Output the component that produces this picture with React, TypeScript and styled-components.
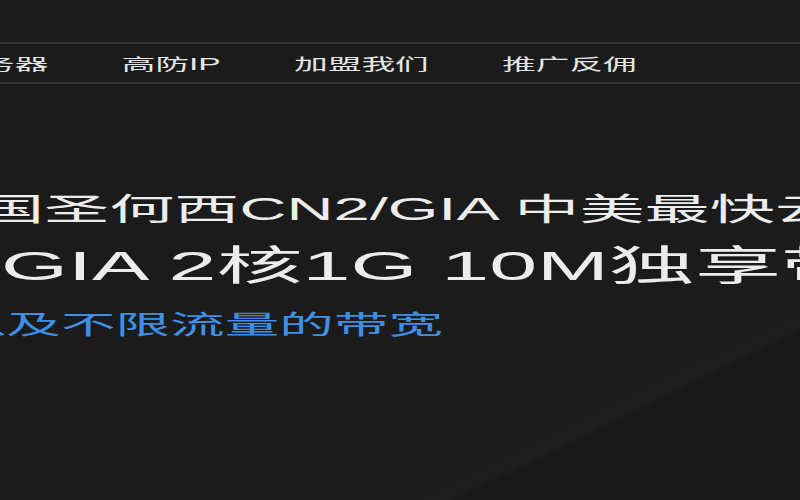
import styled, { createGlobalStyle } from "styled-components";

// the shot is a crop of a wide page, squeezed so it reads about 2.1x wider than tall
const STRETCH = 2.1;

const GlobalStyle = createGlobalStyle`
  html, body {
    margin: 0;
    padding: 0;
    background: #1b1b1b;
    overflow: hidden;
  }
  * {
    box-sizing: border-box;
  }
`;

const Page = styled.div`
  width: 800px;
  height: 500px;
  overflow: hidden;
  background: linear-gradient(
    154deg,
    #1b1b1b 0%,
    #1b1b1b 72%,
    #1e1e1e 80.6%,
    #191919 81.2%,
    #181818 100%
  );
  font-family: "Liberation Sans", "Noto Sans CJK SC", sans-serif;
`;

const Stage = styled.div`
  width: ${800 / STRETCH}px;
  transform: scaleX(${STRETCH});
  transform-origin: 0 0;
  display: flex;
  flex-direction: column;
`;

const TopBar = styled.div`
  height: 42px;
`;

const Nav = styled.nav`
  height: 42px;
  border-top: 2px solid #333333;
  border-bottom: 2px solid #333333;
  display: flex;
  align-items: center;
  gap: 35px;
  padding-top: 4px;
  white-space: nowrap;
`;

const NavItem = styled.a<{ $shift?: number }>`
  margin-left: ${(p) => p.$shift ?? 0}px;
  font-size: 16px;
  line-height: 20px;
  color: #e6e6e6;
  text-decoration: none;
  flex-shrink: 0;
`;

const Hero = styled.section`
  padding-top: 104px;
  display: flex;
  flex-direction: column;
`;

const Title = styled.h1<{ $size: number; $height: number; $shift: number; $gap?: number }>`
  margin: ${(p) => p.$gap ?? 0}px 0 0 ${(p) => p.$shift}px;
  font-size: ${(p) => p.$size}px;
  line-height: ${(p) => p.$height}px;
  font-weight: 400;
  color: #ececec;
  white-space: nowrap;
`;

const Tagline = styled.p`
  margin: 13px 0 0 -75px;
  font-size: 26px;
  line-height: 36px;
  color: #3f8fe6;
  white-space: nowrap;
`;

const navLinks = ["云服务器", "高防IP", "加盟我们", "推广反佣"];

export default function App() {
  return (
    <>
      <GlobalStyle />
      <Page>
        <Stage>
          <TopBar />
          <Nav>
            {navLinks.map((label, i) => (
              <NavItem key={label} href="#" $shift={i === 0 ? -41 : 0}>
                {label}
              </NavItem>
            ))}
          </Nav>
          <Hero>
            <Title $size={31} $height={44} $shift={-41}>
              美国圣何西CN2/GIA 中美最快云服务器
            </Title>
            <Title $size={41} $height={56} $shift={-81.5} $gap={6}>
              CN2GIA 2核1G 10M独享带宽
            </Title>
            <Tagline>线路以及不限流量的带宽</Tagline>
          </Hero>
        </Stage>
      </Page>
    </>
  );
}
